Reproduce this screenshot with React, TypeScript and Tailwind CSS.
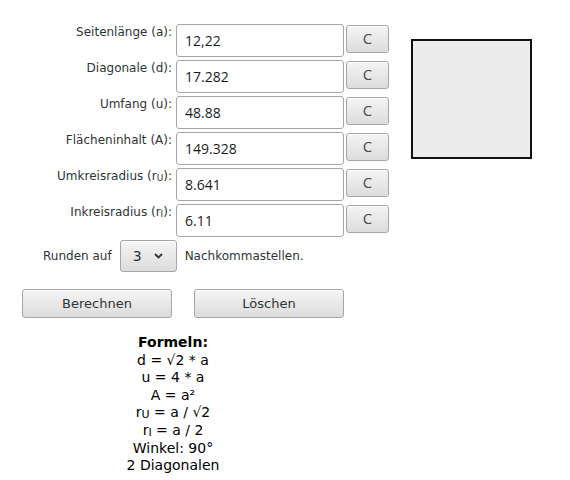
import React from "react";

const rows = [
  { label: <>Seitenlänge (a):</>, value: "12,22" },
  { label: <>Diagonale (d):</>, value: "17.282" },
  { label: <>Umfang (u):</>, value: "48.88" },
  { label: <>Flächeninhalt (A):</>, value: "149.328" },
  {
    label: (
      <>
        Umkreisradius (r<sub className="text-[9px] relative top-[1px]">U</sub>):
      </>
    ),
    value: "8.641",
  },
  {
    label: (
      <>
        Inkreisradius (r<sub className="text-[9px] relative top-[1px]">I</sub>):
      </>
    ),
    value: "6.11",
  },
];

const btn =
  "border border-[#a6a6a6] rounded-[3px] bg-gradient-to-b from-[#f5f5f5] to-[#dcdcdc] text-[#2e3436] shadow-[inset_0_1px_0_#ffffff]";

export default function App() {
  return (
    <div
      className="w-[570px] h-[480px] bg-white text-[#2e3436] overflow-hidden"
      style={{ fontFamily: '"DejaVu Sans", sans-serif' }}
    >
      {/* Eingaben + Quadrat */}
      <div className="flex pt-[24px]">
        <div className="flex flex-col gap-[3px]">
          {rows.map((r, i) => (
            <div key={i} className="flex items-start">
              <div className="w-[176px] pr-[4px] text-right text-[12px] leading-[14px] pt-[1px]">
                {r.label}
              </div>
              <div
                className="w-[168px] h-[33px] border border-[#a6a6a6] rounded-[3px] bg-white flex items-center pl-[8px] text-[14px] text-[#1c1c1c]"
                style={{ fontFamily: '"Open Sans", sans-serif' }}
              >
                {r.value}
              </div>
              <button
                className={`${btn} ml-[2px] mt-[1px] w-[43px] h-[28px] pb-[2px] text-[15px] font-normal text-[#4a4a4a] flex items-center justify-center`}
                style={{ fontFamily: '"Open Sans", sans-serif' }}
              >
                C
              </button>
            </div>
          ))}
        </div>
        <div className="ml-[22px] mt-[15px] w-[121px] h-[120px] border-2 border-[#111] bg-[#ececec]" />
      </div>

      {/* Runden */}
      <div className="flex items-center mt-[3px] pl-[43px] text-[12px]">
        <span>Runden auf</span>
        <div
          className={`${btn} ml-[8px] w-[57px] h-[32px] flex items-center pl-[12px] gap-[12px]`}
        >
          <span className="text-[14px]">3</span>
          <svg width="9" height="6" viewBox="0 0 9 6">
            <polyline
              points="1,1 4.5,4.5 8,1"
              fill="none"
              stroke="#2e3436"
              strokeWidth="1.8"
            />
          </svg>
        </div>
        <span className="ml-[8px]">Nachkommastellen.</span>
      </div>

      {/* Buttons */}
      <div className="flex mt-[17px] pl-[22px] gap-[22px]">
        <button className={`${btn} w-[150px] h-[29px] text-[13px]`}>Berechnen</button>
        <button className={`${btn} w-[150px] h-[29px] text-[13px]`}>Löschen</button>
      </div>

      {/* Formeln */}
      <div className="w-[346px] mt-[16px] text-center text-[14px] leading-[17.6px] text-black">
        <div className="font-bold">Formeln:</div>
        <div>d = √2 * a</div>
        <div>u = 4 * a</div>
        <div>A = a²</div>
        <div>
          r<sub className="text-[11px] relative top-[1px]">U</sub> = a / √2
        </div>
        <div>
          r<sub className="text-[11px] relative top-[1px]">I</sub> = a / 2
        </div>
        <div>Winkel: 90°</div>
        <div>2 Diagonalen</div>
      </div>
    </div>
  );
}
